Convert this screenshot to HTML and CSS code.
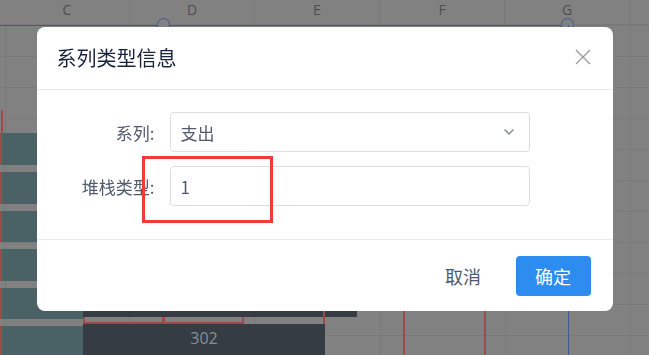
FILE: index.html
```html
<!DOCTYPE html>
<html lang="zh-CN">

<head>
  <meta charset="UTF-8">
  <title>系列类型信息</title>
  <link rel="stylesheet" href="styles.css">
</head>

<body>
  <!-- 背景表格（已被遮罩压暗） -->
  <div class="sheet">
    <div class="col-heads">
      <div class="col-head">C</div>
      <div class="col-head">D</div>
      <div class="col-head">E</div>
      <div class="col-head">F</div>
      <div class="col-head">G</div>
    </div>
    <div class="chart">
      <div class="sel-line"></div>
      <div class="handle handle-d"></div>
      <div class="handle handle-g"></div>
      <div class="sel-side"></div>
      <div class="red-mark"></div>
      <div class="teal-col">
        <div class="teal-bar"></div>
        <div class="teal-bar"></div>
        <div class="teal-bar"></div>
        <div class="teal-bar"></div>
        <div class="teal-bar"></div>
        <div class="teal-bar"></div>
      </div>
      <div class="slate-top"></div>
      <div class="cell-box box-1"></div>
      <div class="cell-box box-2"></div>
      <div class="red-v v-1"></div>
      <div class="red-v v-2"></div>
      <div class="red-v v-3"></div>
      <div class="slate-total">302</div>
    </div>
  </div>

  <div class="modal-wrap">
    <div class="modal">
      <div class="modal-header">
        <div class="modal-title">系列类型信息</div>
        <span class="modal-close">
          <svg width="16" height="16" viewBox="0 0 16 16">
            <path d="M1 1L15 15M15 1L1 15" stroke="#999" stroke-width="1.3" fill="none" />
          </svg>
        </span>
      </div>
      <div class="modal-body">
        <div class="form-row">
          <label class="form-label">系列:</label>
          <div class="form-control select">
            <span>支出</span>
            <svg class="arrow" width="12" height="8" viewBox="0 0 12 8">
              <path d="M1.5 1.5L6 6L10.5 1.5" stroke="#808695" stroke-width="1.4" fill="none" />
            </svg>
          </div>
        </div>
        <div class="form-row">
          <label class="form-label">堆栈类型:</label>
          <div class="form-control"><span>1</span></div>
        </div>
        <div class="mark-box"></div>
      </div>
      <div class="modal-footer">
        <button class="btn btn-text">取消</button>
        <button class="btn btn-primary">确定</button>
      </div>
    </div>
  </div>
</body>

</html>
```

FILE: styles.css
```css
* {
  box-sizing: border-box;
}
body {
  margin: 0;
  width: 649px;
  height: 355px;
  overflow: hidden;
  font-family: "Noto Sans CJK SC", "Noto Sans", sans-serif;
}
.sheet {
  position: relative;
  width: 649px;
  height: 355px;
  background-color: #818181;
  background-image:
    repeating-linear-gradient(to right, transparent 0, transparent 5px, #797979 5px, #797979 6px, transparent 6px, transparent 125px),
    repeating-linear-gradient(to bottom, transparent 0, transparent 25px, #797979 25px, #797979 26px, transparent 26px, transparent 31px);
}
.col-heads {
  display: flex;
  padding-left: 5px;
  height: 25px;
  background: #818181;
  border-bottom: 1px solid #797979;
}
.col-head {
  width: 125px;
  flex: none;
  text-align: center;
  font-family: "Open Sans", "Noto Sans", sans-serif;
  font-size: 14px;
  line-height: normal;
  color: #4e4e4e;
  border-right: 1px solid #797979;
}
.chart {
  position: absolute;
  top: 0;
  left: 0;
  right: 0;
  bottom: 0;
}
.sel-line {
  position: absolute;
  left: 0;
  top: 25px;
  width: 568px;
  height: 1px;
  background: #3d5a92;
}
.handle {
  position: absolute;
  top: 18px;
  width: 13px;
  height: 13px;
  border: 1px solid #3d5a92;
  border-radius: 50%;
  background: #818181;
}
.handle-d {
  left: 157px;
}
.handle-g {
  left: 561px;
}
.sel-side {
  position: absolute;
  left: 568px;
  top: 25px;
  width: 1px;
  bottom: 0;
  background: #3d5a92;
}
.red-mark {
  position: absolute;
  left: 1px;
  top: 110px;
  width: 2px;
  height: 23px;
  background: #9c4a4a;
}
.teal-col {
  position: absolute;
  left: 0;
  top: 133px;
  width: 83px;
  bottom: 0;
  display: flex;
  flex-direction: column;
  gap: 7px;
}
.teal-bar {
  height: 31.5px;
  flex: none;
  background: #4a6266;
  border-left: 2px solid #9c4a4a;
}
.teal-bar:first-child {
  height: 32px;
}
.slate-top {
  position: absolute;
  left: 83px;
  top: 280px;
  width: 274px;
  height: 37px;
  background: #353c44;
}
.cell-box {
  position: absolute;
  top: 317px;
  width: 81px;
  height: 7px;
  border: 2px solid #9c4a4a;
  border-top: none;
}
.box-1 {
  left: 83px;
}
.box-2 {
  left: 163px;
}
.red-v {
  position: absolute;
  top: 300px;
  width: 2px;
  bottom: 0;
  background: #9c4a4a;
}
.v-1 {
  left: 323px;
  height: 24px;
  bottom: auto;
}
.v-2 {
  left: 403px;
}
.v-3 {
  left: 484px;
}
.slate-total {
  position: absolute;
  left: 83px;
  top: 324px;
  width: 242px;
  bottom: 0;
  background: #353c44;
  color: #8a8f95;
  font-family: "Open Sans", "Noto Sans", sans-serif;
  font-size: 16px;
  line-height: 29px;
  text-align: center;
}
.modal-wrap {
  position: fixed;
  top: 0;
  left: 0;
  right: 0;
  bottom: 0;
}
.modal {
  width: 576px;
  margin: 27px auto 0;
  background: #ffffff;
  border-radius: 8px;
}
.modal-header {
  position: relative;
  padding: 19px 20px;
  border-bottom: 1px solid #e8eaec;
}
.modal-title {
  font-size: 20px;
  line-height: 24px;
  color: #17233d;
}
.modal-close {
  position: absolute;
  right: 22px;
  top: 22px;
  width: 16px;
  height: 16px;
  display: flex;
}
.modal-body {
  position: relative;
  padding: 22px 83px 33px 0;
}
.form-row {
  display: flex;
  align-items: center;
}
.form-row + .form-row {
  margin-top: 14px;
}
.form-label {
  width: 133px;
  padding-right: 15px;
  text-align: right;
  font-size: 17px;
  color: #515a6e;
}
.form-control {
  flex: 1;
  height: 40px;
  display: flex;
  align-items: center;
  justify-content: space-between;
  padding: 0 15px 0 10px;
  border: 1px solid #dcdee2;
  border-radius: 4px;
  font-size: 17px;
  color: #515a6e;
}
.form-control .arrow {
  margin-right: -1px;
}
.mark-box {
  position: absolute;
  left: 105px;
  top: 66px;
  width: 131px;
  height: 67px;
  border: 3px solid #ef3b3b;
}
.modal-footer {
  display: flex;
  justify-content: flex-end;
  gap: 15px;
  padding: 16px 22px 15px;
  border-top: 1px solid #e8eaec;
}
.btn {
  width: 75px;
  height: 40px;
  padding: 0;
  border: none;
  border-radius: 4px;
  font-family: inherit;
  font-size: 18px;
}
.btn-text {
  background: transparent;
  color: #515a6e;
}
.btn-primary {
  background: #2d8cf0;
  color: #ffffff;
}
```
